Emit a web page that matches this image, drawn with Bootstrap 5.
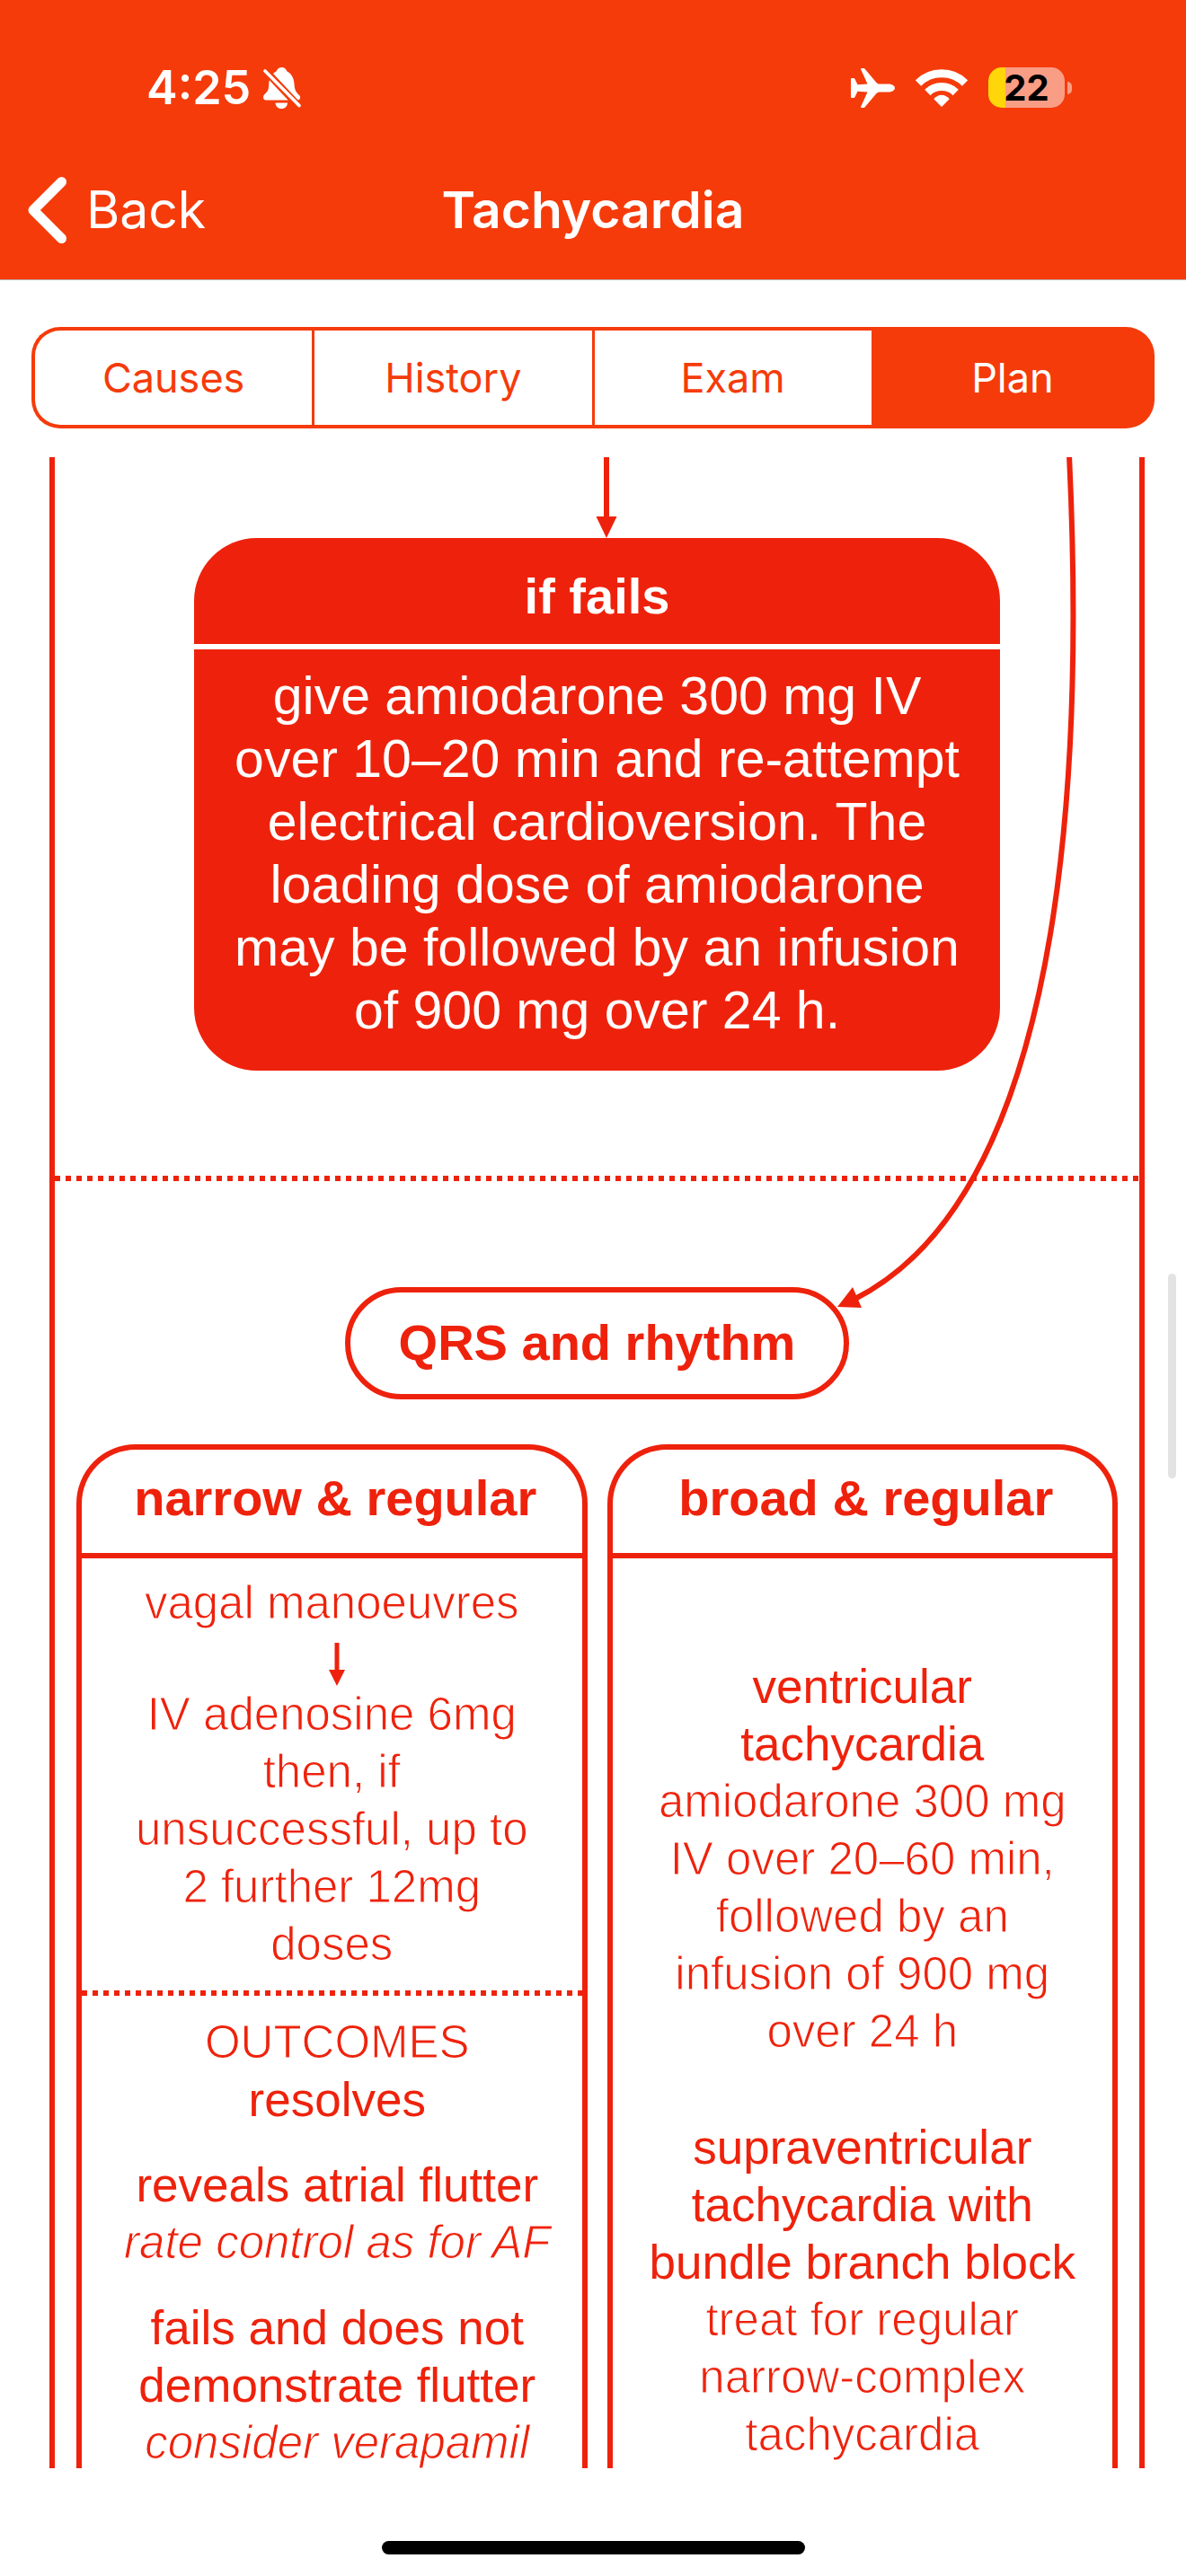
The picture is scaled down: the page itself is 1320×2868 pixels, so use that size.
<!DOCTYPE html>
<html lang="en">
<head>
<meta charset="utf-8">
<meta name="viewport" content="width=device-width, initial-scale=1">
<title>Tachycardia</title>
<link href="https://cdn.jsdelivr.net/npm/bootstrap@5.3.0/dist/css/bootstrap.min.css" rel="stylesheet">
<style>
  :root { --bar: #f53b0a; --ink: #ee220c; }
  body { font-family: Inter, "Liberation Sans", sans-serif; background: #fff; }
  .app-bar { background: var(--bar); color: #fff; border-bottom: 1px solid #b9b4b4; }
  .status-row { height: 156px; padding: 39px 127px 0 163px; }
  .clock-group { gap: 14px; }
  .clock { font-size: 52px; line-height: 64px; font-weight: 600; }
  .status-icons { gap: 23px; }
  .battery { gap: 3px; }
  .battery-body { width: 85px; height: 45px; border-radius: 15px; color: #000; font-size: 40px; line-height: 45px; font-weight: 700;
    background: linear-gradient(to right, #ffd60a 19px, rgba(255,255,255,.5) 19px); }
  .battery-tip { width: 5px; height: 14px; border-radius: 0 5px 5px 0; background: rgba(255,255,255,.5); }
  .title-row { display: grid; grid-template-columns: 1fr auto 1fr; height: 155px; font-size: 57px; line-height: 70px; }
  .back-link { gap: 22px; padding-left: 31px; }
  .page-title { font-size: 57px; line-height: 70px; font-weight: 600; }
  .segments { margin: 52px 35px 32px; height: 113px; }
  .segments .btn { flex: 1 1 0; display: flex; align-items: center; justify-content: center; padding: 0; border: solid var(--bar); border-width: 4px 0 4px 3px; border-radius: 0; color: var(--bar); font-size: 45px; line-height: 60px; font-weight: 400; }
  .segments .btn:first-of-type { border-left-width: 4px; border-radius: 32px 0 0 32px; }
  .segments .btn:last-of-type { border-right-width: 4px; border-radius: 0 32px 32px 0; }
  .segments .btn-check:checked + .btn { background: var(--bar); border-color: var(--bar); color: #fff; }

  .chart { font-family: "Liberation Sans", Arial, sans-serif; color: var(--ink); min-height: 0; padding: 0 46px 0 55px; }
  .chart-frame { border: solid var(--ink); border-width: 0 6px; }
  .dots { height: 6px; background: repeating-linear-gradient(to right, var(--ink) 0 6px, transparent 6px 12px); }
  .step-title { font-size: 56px; line-height: 70px; font-weight: 700; }
  .lead-in { height: 90px; padding-left: 20px; }
  .fail-box { margin: 0 155px 117px; border-radius: 70px; overflow: hidden; background: var(--ink); color: #fff; }
  .fail-box .step-title { padding: 30px 40px 18px; border-bottom: 6px solid #fff; }
  .fail-text { padding: 17px 40px 32px; font-size: 59px; line-height: 70px; }
  .rhythm-pill { margin: 118px 0 50px; padding: 21px 54px 22px; border: 6px solid var(--ink); border-radius: 63px; }
  .branches { gap: 22px; padding: 0 24px; }
  .branch { flex: 1 1 0; border: 6px solid var(--ink); border-bottom: 0; border-radius: 66px 66px 0 0; }
  .branch .step-title { padding: 19px 0 26px 8px; border-bottom: 6px solid var(--ink); }
  .thin-text { font-size: 51px; line-height: 64px; -webkit-text-stroke: 1px #fff; }
  .firm-text { font-size: 53px; line-height: 64px; }
  .branch-narrow { padding-top: 18px; }
  .branch-narrow .dots { margin: 19px 0 20px; }
  .arrow-line { padding: 12px 0 0 12px; }
  .outcomes { padding-left: 12px; }
  .outcome { margin-top: 31px; }
  .branch-broad { padding-top: 111px; }
  .second-cause { margin-top: 65px; }
  .bypass { right: 0; top: 0; }
  .scroll-thumb { right: 11px; top: 1418px; width: 9px; height: 228px; border-radius: 5px; background: #e3e3e3; }
  .home-area { padding: 81px 0 24px; }
  .home-bar { width: 471px; height: 15px; border-radius: 8px; background: #000; }
</style>
</head>
<body>
<div class="vh-100 d-flex flex-column position-relative overflow-hidden">
  <header class="app-bar flex-shrink-0">
    <div class="status-row d-flex justify-content-between align-items-center">
      <div class="clock-group d-flex align-items-center">
        <span class="clock">4:25</span>
        <svg width="42" height="46" viewBox="0 0 42 46" role="img" aria-label="Silent">
          <path fill="#fff" d="M20.500 0C23.500 0 25.500 2 26.500 4.500C31.500 7 34 12 34.500 18C34.800 25 36 27 39.500 30.500C41 32 41.500 33 41 34.500C40.500 36 39.500 36.500 38 36.500H3C1 36.500 0 35 0 33.500C0 31.500 1 30 3 28.500C5.500 26 6 24 6.300 18C6.700 12 9.500 7 14.500 4.500C15.500 2 17.500 0 20.500 0ZM13.500 39.500h13.500c0 3.800-3 6.500-6.700 6.500s-6.800-2.700-6.800-6.500z"/>
          <path fill="none" stroke="#f53b0a" stroke-width="8" d="M-1 0L43 47"/>
          <path fill="none" stroke="#fff" stroke-width="3.600" stroke-linecap="round" d="M2 4L40 42.500"/>
        </svg>
      </div>
      <div class="status-icons d-flex align-items-center">
        <svg width="49" height="44" viewBox="0 0 49 44" fill="#fff" role="img" aria-label="Airplane mode">
          <path d="M11 1Q11 0 12 0H14Q15.200 0 16 1.200L28.500 16Q29.700 17.500 31.500 17.500H42C46 17.500 49 19.700 49 22S46 26.500 42 26.500H31.500Q29.700 26.500 28.500 28L16 42.800Q15.200 44 14 44H12Q11 44 11 43L18.500 26.500L7.500 25.800L4.500 32Q4 33 3 33H1Q0 33 0 32V12Q0 11 1 11H3Q4 11 4.500 12L7.500 18.200L18.500 17.500Z"/>
        </svg>
        <svg width="58" height="42" viewBox="0 0 58 42" role="img" aria-label="Wi-Fi">
          <g fill="none" stroke="#fff" stroke-width="9"><path d="M3 15.500A37 37 0 0 1 55 15.500"/><path d="M13.300 26A22.500 22.500 0 0 1 44.700 26"/></g>
          <path fill="#fff" d="M29 42L20.300 33.200Q24 28.700 29 28.700T37.700 33.200Z"/>
        </svg>
        <div class="battery d-flex align-items-center">
          <div class="battery-body text-center">22</div>
          <div class="battery-tip"></div>
        </div>
      </div>
    </div>
    <nav class="title-row align-items-center">
      <a href="#" class="back-link d-flex align-items-center text-white text-decoration-none">
        <svg width="43" height="74" viewBox="0 0 43 74" fill="none" stroke="#fff" stroke-width="11" stroke-linecap="round" stroke-linejoin="round" aria-hidden="true"><path d="M37.500 5.500L6 37L37.500 68.500"/></svg>
        <span>Back</span>
      </a>
      <h1 class="page-title m-0">Tachycardia</h1>
      <span></span>
    </nav>
  </header>

  <div class="segments d-flex flex-shrink-0" role="group" aria-label="Section">
    <input type="radio" class="btn-check" name="section" id="seg-causes"><label class="btn" for="seg-causes">Causes</label>
    <input type="radio" class="btn-check" name="section" id="seg-history"><label class="btn" for="seg-history">History</label>
    <input type="radio" class="btn-check" name="section" id="seg-exam"><label class="btn" for="seg-exam">Exam</label>
    <input type="radio" class="btn-check" name="section" id="seg-plan" checked><label class="btn" for="seg-plan">Plan</label>
  </div>

  <main class="chart flex-grow-1 d-flex overflow-hidden text-center">
    <div class="chart-frame flex-grow-1 d-flex flex-column position-relative">
      <div class="lead-in flex-shrink-0">
        <svg class="d-block mx-auto" width="24" height="90" viewBox="0 0 24 90" fill="#ee220c" aria-hidden="true"><path d="M9 0H15V66H23.500L12 90L0.500 66H9Z"/></svg>
      </div>
      <section class="fail-box flex-shrink-0">
        <h2 class="step-title m-0">if fails</h2>
        <p class="fail-text m-0">give amiodarone 300 mg IV over 10–20 min and re-attempt electrical cardioversion. The loading dose of amiodarone may be followed by an infusion of 900 mg over 24 h.</p>
      </section>
      <div class="dots flex-shrink-0"></div>
      <h2 class="rhythm-pill step-title align-self-center flex-shrink-0">QRS and rhythm</h2>
      <div class="branches d-flex flex-grow-1">
        <section class="branch">
          <h3 class="step-title m-0">narrow &amp; regular</h3>
          <div class="branch-narrow">
            <div class="thin-text">vagal manoeuvres</div>
            <div class="arrow-line">
              <svg class="d-block mx-auto" width="18" height="48" viewBox="0 0 18 48" fill="#ee220c" aria-hidden="true"><path d="M6.500 0H11.500V30H18L9 48L0 30H6.500Z"/></svg>
            </div>
            <div class="thin-text">IV adenosine 6mg<br>then, if<br>unsuccessful, up to<br>2 further 12mg<br>doses</div>
            <div class="dots"></div>
            <div class="outcomes">
              <div class="thin-text">OUTCOMES</div>
              <div class="firm-text">resolves</div>
              <div class="outcome">
                <div class="firm-text">reveals atrial flutter</div>
                <div class="thin-text fst-italic">rate control as for AF</div>
              </div>
              <div class="outcome">
                <div class="firm-text">fails and does not<br>demonstrate flutter</div>
                <div class="thin-text fst-italic">consider verapamil</div>
              </div>
            </div>
          </div>
        </section>
        <section class="branch">
          <h3 class="step-title m-0">broad &amp; regular</h3>
          <div class="branch-broad">
            <div class="firm-text">ventricular<br>tachycardia</div>
            <div class="thin-text">amiodarone 300 mg<br>IV over 20–60 min,<br>followed by an<br>infusion of 900 mg<br>over 24 h</div>
            <div class="second-cause">
              <div class="firm-text">supraventricular<br>tachycardia with<br>bundle branch block</div>
              <div class="thin-text">treat for regular<br>narrow-complex<br>tachycardia</div>
            </div>
          </div>
        </section>
      </div>
      <!-- connector that bypasses the treatment box -->
      <svg class="bypass position-absolute" width="368" height="960" viewBox="0 0 368 960" aria-hidden="true">
        <path fill="none" stroke="#ee220c" stroke-width="6" d="M290 -2C304 291 300 813 50 938"/>
        <path fill="#ee220c" d="M32 946L49 924L59 947Z"/>
      </svg>
    </div>
  </main>

  <footer class="home-area flex-shrink-0"><div class="home-bar mx-auto"></div></footer>
  <div class="scroll-thumb position-absolute"></div>
</div>
<script src="https://cdn.jsdelivr.net/npm/bootstrap@5.3.0/dist/js/bootstrap.bundle.min.js"></script>
</body>
</html>
